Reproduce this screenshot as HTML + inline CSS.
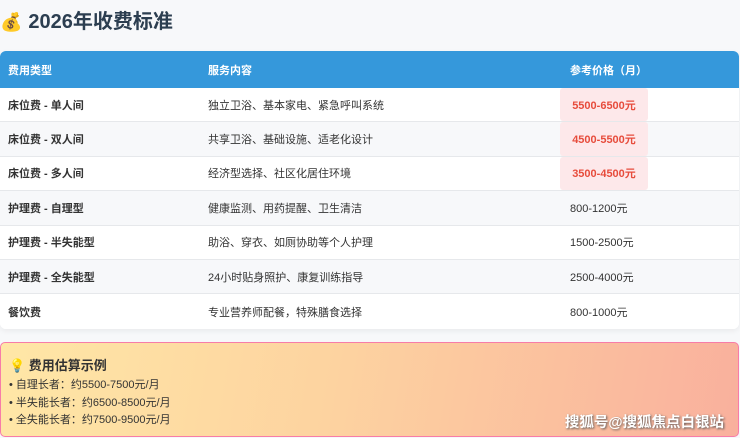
<!DOCTYPE html>
<html><head><meta charset="utf-8"><style>
*{margin:0;padding:0;box-sizing:border-box}
body{width:740px;height:438px;background:#f7f8fa;font-family:"Liberation Sans","Noto Sans CJK SC",sans-serif;position:relative;overflow:hidden;color:#333}
h1{position:absolute;left:0;top:8px;font-size:20px;font-weight:bold;color:#2c3e50;line-height:28px;display:flex;align-items:center}
.tbl{position:absolute;left:0;top:51px;width:739px;border-radius:6px;overflow:hidden;background:#fff;box-shadow:0 2px 6px rgba(0,0,0,.06)}
.row{display:flex;height:34.4px;align-items:center;border-bottom:1px solid #e6e8eb;font-size:11px;position:relative}
.row.head{background:#3598db !important;color:#fff;font-weight:bold;height:37px;border:none}
.c1{position:absolute;left:8px}.c2{position:absolute;left:208px}.c3{position:absolute;left:570px}
.b{font-weight:bold}
.p{position:absolute;left:560px;top:0;bottom:0;width:88px;background:#fde8ea;border-radius:3px;color:#e74c3c;font-weight:bold;font-size:11px;display:flex;align-items:center;justify-content:center}
.box{position:absolute;left:0;top:342px;width:739px;height:95px;border:1.5px solid #f77ca8;border-radius:5px;background:linear-gradient(100deg,#ffe7a6 0%,#fdd3a0 45%,#f9b09d 100%);font-size:11px;color:#333}
.box .t{position:absolute;left:8px;top:12px;font-weight:bold;font-size:13px}
.box .l{position:absolute;left:8px}
.wm{position:absolute;right:14px;top:68px;color:#fff;font-size:14.5px;font-weight:bold;text-shadow:1px 1px 2px #555}
</style></head><body>
<h1><span style="font-size:18px;margin-right:6px">💰</span>2026年收费标准</h1>
<div class="tbl">
<div class="row head"><span class="c1">费用类型</span><span class="c2">服务内容</span><span class="c3">参考价格（月）</span></div>
<div class="row" style="background:#fff"><span class="c1 b">床位费 - 单人间</span><span class="c2">独立卫浴、基本家电、紧急呼叫系统</span><span class="p">5500-6500元</span></div>
<div class="row" style="background:#f7f8fa"><span class="c1 b">床位费 - 双人间</span><span class="c2">共享卫浴、基础设施、适老化设计</span><span class="p">4500-5500元</span></div>
<div class="row" style="background:#fff"><span class="c1 b">床位费 - 多人间</span><span class="c2">经济型选择、社区化居住环境</span><span class="p">3500-4500元</span></div>
<div class="row" style="background:#f7f8fa"><span class="c1 b">护理费 - 自理型</span><span class="c2">健康监测、用药提醒、卫生清洁</span><span class="c3">800-1200元</span></div>
<div class="row" style="background:#fff"><span class="c1 b">护理费 - 半失能型</span><span class="c2">助浴、穿衣、如厕协助等个人护理</span><span class="c3">1500-2500元</span></div>
<div class="row" style="background:#f7f8fa"><span class="c1 b">护理费 - 全失能型</span><span class="c2">24小时贴身照护、康复训练指导</span><span class="c3">2500-4000元</span></div>
<div class="row" style="background:#fff;border:none"><span class="c1 b">餐饮费</span><span class="c2">专业营养师配餐，特殊膳食选择</span><span class="c3">800-1000元</span></div>
</div>
<div class="box">
<div class="t">💡 费用估算示例</div>
<div class="l" style="top:33px">• 自理长者：约5500-7500元/月</div>
<div class="l" style="top:51px">• 半失能长者：约6500-8500元/月</div>
<div class="l" style="top:68px">• 全失能长者：约7500-9500元/月</div>
<div class="wm">搜狐号@搜狐焦点白银站</div>
</div>
</body></html>
